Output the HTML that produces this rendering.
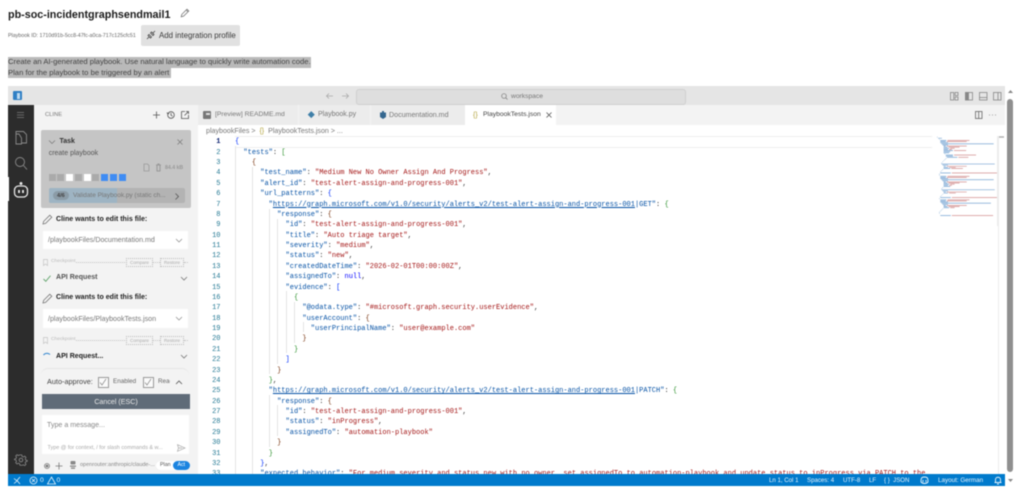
<!DOCTYPE html>
<html lang="en"><head><meta charset="utf-8"><title>pb-soc-incidentgraphsendmail1</title>
<style>
html,body{margin:0;padding:0;background:#fff;width:1024px;height:492px;overflow:hidden}
#r{position:relative;width:1024px;height:492px;overflow:hidden;font-family:"Liberation Sans",sans-serif;color:#333;filter:blur(.4px)}
.a{position:absolute}
.t{position:absolute;white-space:nowrap;line-height:10px;height:10px}
svg{position:absolute;overflow:visible}
#code,#nums{position:absolute;top:136px;font-family:"Liberation Mono",monospace;font-size:7.025px;line-height:10.37px;white-space:pre}
#nums{left:205px;width:15.5px;text-align:right;color:#237893}
#code{left:235px;color:#0451a5}
.s{color:#a31515}.b1{color:#0431fa}.b2{color:#319331}.b3{color:#7b3814}.n{color:#0000ff}.l{text-decoration:underline;text-decoration-color:#0451a5;text-underline-offset:1px}.p{color:#333}
.g{position:absolute;width:1px;background:#e4e4e4}
.drop{position:absolute;left:43px;width:145px;background:#fff}
.chk{position:absolute;border:1px dotted #bbb;height:7px;font-size:4.6px;line-height:7px;text-align:center;color:#aaa}
.dots{position:absolute;height:0;border-top:1px dotted #c4c4c4}
</style></head><body><div id="r">

<div class="t" style="left:8px;top:10px;font-size:10.75px;font-weight:700;color:#1b1b1b;line-height:10px">pb-soc-incidentgraphsendmail1</div>
<svg style="left:180px;top:8px" width="10" height="10" viewBox="0 0 10 10" fill="none" stroke="#777" stroke-width=".8"><path d="M1.200 8.800l.6-2.400L7 1.200 8.800 3 3.600 8.200z M6.200 2l1.800 1.800"/></svg>
<div class="t" style="left:8px;top:31px;font-size:5.3px;color:#666">Playbook ID: 1710d91b-5cc8-47fc-a0ca-717c125cfc51</div>
<div class="a" style="left:141px;top:25px;width:99px;height:21px;background:#e1e1e1;border-radius:2px"></div>
<svg style="left:146px;top:30px" width="10" height="10" viewBox="0 0 10 10" fill="none" stroke="#444" stroke-width=".8"><path d="M1 9l2-2M9 1L7 3M3 4.500L5.500 7 4.500 8 2 5.500zM4.500 3l1-1 2.500 2.500-1 1z"/></svg>
<div class="t" style="left:159px;top:31px;font-size:7.9px;color:#3a3a3a">Add integration profile</div>

<div class="a" style="left:8px;top:57px;width:303px;height:10.500px;background:#b9b9b9"></div>
<div class="a" style="left:8px;top:67.500px;width:163px;height:10.500px;background:#b9b9b9"></div>
<div class="t" style="left:8px;top:57px;font-size:7.67px;color:#444">Create an AI-generated playbook. Use natural language to quickly write automation code.</div>
<div class="t" style="left:8px;top:67.500px;font-size:7.67px;color:#444">Plan for the playbook to be triggered by an alert</div>

<!-- IDE frame -->
<div class="a" style="left:8px;top:86px;width:997px;height:19px;background:#e5e5e5"></div>
<div class="a" style="left:13px;top:91px;width:9px;height:9px;background:#2f7fc4;border-radius:1px"></div>
<div class="a" style="left:16.500px;top:92.500px;width:3px;height:6px;background:#bcd9f0"></div>
<svg style="left:325px;top:92px" width="26" height="8" viewBox="0 0 26 8" fill="none" stroke="#aaa" stroke-width=".8"><path d="M8 4H1.500M4 1.500L1.500 4 4 6.500M17 4h6.500M21 1.500L23.500 4 21 6.500"/></svg>
<div class="a" style="left:356px;top:89px;width:328px;height:13.500px;background:#dedede;border:1px solid #cfcfcf;border-radius:3px"></div>
<svg style="left:501px;top:93px" width="7" height="7" viewBox="0 0 7 7" fill="none" stroke="#777" stroke-width=".7"><circle cx="3" cy="3" r="2.300"/><path d="M4.700 4.700L6.500 6.500"/></svg>
<div class="t" style="left:511px;top:92px;font-size:6.700px;color:#777">workspace</div>
<svg style="left:950px;top:92px" width="52" height="9" viewBox="0 0 52 9" fill="none" stroke="#888" stroke-width=".8"><rect x=".5" y=".5" width="3.200" height="7.500"/><rect x="5" y=".5" width="3" height="3"/><rect x="5" y="5" width="3" height="3"/><rect x="15.500" y=".5" width="7" height="7.500"/><rect x="15.500" y=".5" width="3" height="7.500" fill="#888"/><rect x="29.500" y=".5" width="7.500" height="7.500"/><path d="M29.500 5.500H37"/><rect x="43.500" y=".5" width="7.500" height="7.500"/><path d="M48 .5V8"/></svg>

<!-- activity bar -->
<div class="a" style="left:8px;top:105px;width:25.500px;height:369px;background:#2c2c2c"></div>
<svg style="left:8px;top:105px" width="26" height="369" viewBox="0 0 26 369" fill="none" stroke="#8a8a8a" stroke-width=".9">
<path d="M9 7.500h7M9 10h7M9 12.500h7" stroke="#666"/>
<path d="M8 29V26.500h7.500l3 3V38h-5M8 29v10h5.500V33L11 29z"/>
<circle cx="12" cy="57" r="4.500"/><path d="M15.500 60.500L19 64.500"/>
<rect x="6.500" y="81" width="13" height="11" rx="4" stroke="#e8e8e8" stroke-width="1.300"/><circle cx="13" cy="78.500" r="1" fill="#e8e8e8" stroke="#e8e8e8"/><path d="M11 85v3M15 85v3" stroke="#fff" stroke-width="1.600"/>
<g stroke="#8a8a8a" transform="translate(7,349)"><circle cx="6" cy="6" r="1.800"/><path d="M5 .5h2l.4 1.700 1.400.6 1.500-.9 1.400 1.400-.9 1.500.6 1.400 1.700.4v1l-1.700.5-.6 1.400.9 1.500-1.400 1.400-1.500-.9-1.400.6L7 12H5l-.4-1.700-1.400-.6-1.500.9L.3 9.200l.9-1.500-.6-1.400L-1 6V5l1.600-.4.6-1.400L.3 1.700 1.700.3l1.500.9L4.600.6z" transform="scale(.9) translate(.5,.5)"/></g>
</svg>
<div class="a" style="left:8px;top:177px;width:1px;height:24px;background:#fff"></div>

<!-- sidebar -->
<div class="a" style="left:33.500px;top:105px;width:164.500px;height:369px;background:#f3f3f3"></div>
<div class="t" style="left:45px;top:110px;font-size:5.800px;color:#777">CLINE</div>
<svg style="left:151px;top:109px" width="42" height="12" viewBox="0 0 42 12" fill="none" stroke="#555" stroke-width=".8"><path d="M5.500 2.500v7M2 6h7"/><circle cx="20" cy="6" r="3.300"/><path d="M20 4v2.200l1.500 1M16 3.500l.8 1.500 1.400-.6"/><path d="M30.500 2.500H34M37.500 6v3.500h-7v-7M33.500 6.500l4-4M35 2.500h2.500V5" /></svg>

<div class="a" style="left:41px;top:130px;width:150px;height:78px;background:#c5c5c5;border-radius:2px"></div>
<svg style="left:48px;top:139px" width="8" height="6" viewBox="0 0 8 6" fill="none" stroke="#777" stroke-width=".7"><path d="M1 1.500L4 4.500 7 1.500"/></svg>
<div class="t" style="left:59.500px;top:136.500px;font-size:7px;font-weight:700;color:#333">Task</div>
<svg style="left:176.500px;top:139px" width="6" height="6" viewBox="0 0 6 6" stroke="#777" stroke-width=".7"><path d="M.5.500l5 5M5.500.500l-5 5"/></svg>
<div class="t" style="left:48.700px;top:148.500px;font-size:7px;color:#555">create playbook</div>
<svg style="left:143px;top:163px" width="20" height="9" viewBox="0 0 20 9" fill="none" stroke="#999" stroke-width=".8"><path d="M1 1h3.500L6 2.500V8H1z"/><path d="M13 2h5M14 2V8h3V2M15 2V1h1v1" stroke-width="1.100"/></svg>
<div class="t" style="left:165px;top:162.500px;font-size:5.200px;font-weight:700;color:#999">84.4 kB</div>
<div class="a" style="left:48.500px;top:174px;width:7px;height:7px;background:#aaa"></div>
<div class="a" style="left:57px;top:174px;width:7px;height:7px;background:#aaa"></div>
<div class="a" style="left:66px;top:174px;width:7px;height:7px;background:#fff"></div>
<div class="a" style="left:75px;top:174px;width:7px;height:7px;background:#aaa"></div>
<div class="a" style="left:84px;top:174px;width:7px;height:7px;background:#fff"></div>
<div class="a" style="left:92px;top:174px;width:7px;height:7px;background:#aaa"></div>
<div class="a" style="left:101px;top:174px;width:7px;height:7px;background:#3f8cf3"></div>
<div class="a" style="left:110px;top:174px;width:7px;height:7px;background:#3f8cf3"></div>
<div class="a" style="left:118.500px;top:174px;width:7px;height:7px;background:#3f8cf3"></div>
<div class="a" style="left:48.500px;top:188px;width:136.500px;height:15px;background:#b3b3b3;border-radius:2px"></div>
<div class="a" style="left:48.500px;top:188px;width:68.500px;height:15px;background:#9eb4c3;border-radius:2px 0 0 2px"></div>
<div class="a" style="left:53px;top:191px;width:16px;height:9px;background:#8b9ba6;border-radius:5px"></div>
<div class="t" style="left:57px;top:190.500px;font-size:5.600px;font-weight:700;color:#444">4/6</div>
<div class="t" style="left:73px;top:190.500px;font-size:6.450px;color:#777">Validate Playbook.py (static ch...</div>
<svg style="left:174px;top:192.500px" width="6" height="7" viewBox="0 0 6 7" fill="none" stroke="#555" stroke-width=".8"><path d="M1.500 .5L4.500 3.500 1.500 6.500"/></svg>

<svg style="left:42px;top:214px" width="11" height="11" viewBox="0 0 11 11" fill="none" stroke="#777" stroke-width=".8"><path d="M1 10l.6-2.600L7.800 1.200 9.800 3.200 3.600 9.400z"/></svg>
<div class="t" style="left:56px;top:214.500px;font-size:7.050px;font-weight:700;color:#222">Cline wants to edit this file:</div>
<div class="drop" style="top:231px;height:18px"></div>
<div class="t" style="left:48px;top:235px;font-size:7.100px;color:#777">/playbookFiles/Documentation.md</div>
<svg style="left:175px;top:237.500px" width="8" height="5" viewBox="0 0 8 5" fill="none" stroke="#888" stroke-width=".7"><path d="M1 1l3 3 3-3"/></svg>
<svg style="left:43px;top:259px" width="5" height="7" viewBox="0 0 5 7" fill="none" stroke="#c4c4c4" stroke-width=".7"><path d="M.5.500h4v6l-2-1.500-2 1.500z"/></svg>
<div class="t" style="left:51px;top:257px;font-size:4.900px;color:#bbb">Checkpoint</div>
<div class="dots" style="left:76px;top:262px;width:49px"></div>
<div class="chk" style="left:126px;top:258px;width:25px">Compare</div>
<div class="dots" style="left:153px;top:262px;width:7px"></div>
<div class="chk" style="left:160px;top:258px;width:22px">Restore</div>
<div class="dots" style="left:184px;top:262px;width:4px"></div>
<svg style="left:43px;top:274.500px" width="8" height="7" viewBox="0 0 8 7" fill="none" stroke="#64a56f" stroke-width=".9"><path d="M.5 4L2.800 6.300 7.500.700"/></svg>
<div class="t" style="left:56px;top:273px;font-size:7.050px;font-weight:700;color:#555">API Request</div>
<svg style="left:180px;top:275.500px" width="8" height="5" viewBox="0 0 8 5" fill="none" stroke="#777" stroke-width=".8"><path d="M1 1l3 3 3-3"/></svg>

<svg style="left:42px;top:292.500px" width="11" height="11" viewBox="0 0 11 11" fill="none" stroke="#777" stroke-width=".8"><path d="M1 10l.6-2.600L7.800 1.200 9.800 3.200 3.600 9.400z"/></svg>
<div class="t" style="left:56px;top:293px;font-size:7.050px;font-weight:700;color:#222">Cline wants to edit this file:</div>
<div class="drop" style="top:309px;height:19px"></div>
<div class="t" style="left:48px;top:314px;font-size:7.100px;color:#777">/playbookFiles/PlaybookTests.json</div>
<svg style="left:175px;top:316px" width="8" height="5" viewBox="0 0 8 5" fill="none" stroke="#888" stroke-width=".7"><path d="M1 1l3 3 3-3"/></svg>
<svg style="left:43px;top:337px" width="5" height="7" viewBox="0 0 5 7" fill="none" stroke="#c4c4c4" stroke-width=".7"><path d="M.5.500h4v6l-2-1.500-2 1.500z"/></svg>
<div class="t" style="left:51px;top:335px;font-size:4.900px;color:#bbb">Checkpoint</div>
<div class="dots" style="left:76px;top:340px;width:49px"></div>
<div class="chk" style="left:126px;top:336px;width:25px">Compare</div>
<div class="dots" style="left:153px;top:340px;width:7px"></div>
<div class="chk" style="left:160px;top:336px;width:22px">Restore</div>
<div class="dots" style="left:184px;top:340px;width:4px"></div>
<svg style="left:43px;top:352px" width="8" height="5" viewBox="0 0 8 5" fill="none" stroke="#3a8ad0" stroke-width="1.100"><path d="M.5 3C2 1 5 .8 7 2.500"/></svg>
<div class="t" style="left:56px;top:351.500px;font-size:7.050px;font-weight:700;color:#222">API Request...</div>
<svg style="left:180px;top:354px" width="8" height="5" viewBox="0 0 8 5" fill="none" stroke="#777" stroke-width=".8"><path d="M1 1l3 3 3-3"/></svg>

<div class="a" style="left:41px;top:368px;width:148px;height:20px;border-top:1px solid #e6e6e6;border-radius:7px 7px 0 0"></div>
<div class="t" style="left:47px;top:377px;font-size:7.300px;color:#444">Auto-approve:</div>
<div class="a" style="left:98px;top:377px;width:9px;height:9px;border:.8px solid #999;background:#fafafa"></div>
<svg style="left:99px;top:378px" width="8" height="8" viewBox="0 0 8 8" fill="none" stroke="#888" stroke-width=".7"><path d="M1 4.500L3 7 7 1"/></svg>
<div class="t" style="left:113px;top:377px;font-size:6.300px;color:#666">Enabled</div>
<div class="a" style="left:143px;top:377px;width:9px;height:9px;border:.8px solid #999;background:#fafafa"></div>
<svg style="left:144px;top:378px" width="8" height="8" viewBox="0 0 8 8" fill="none" stroke="#888" stroke-width=".7"><path d="M1 4.500L3 7 7 1"/></svg>
<div class="a" style="left:158px;top:377px;width:12px;height:10px;overflow:hidden"><div class="t" style="left:0;top:0;font-size:6.300px;color:#666">Read</div></div>
<svg style="left:175px;top:380px" width="8" height="5" viewBox="0 0 8 5" fill="none" stroke="#555" stroke-width=".8"><path d="M1 4l3-3 3 3"/></svg>
<div class="a" style="left:42px;top:394px;width:148px;height:15px;background:#5f6b78"></div>
<div class="t" style="left:42px;top:397px;width:148px;text-align:center;font-size:7.100px;color:#e8e8e8">Cancel (ESC)</div>
<div class="a" style="left:42px;top:414.500px;width:147px;height:39px;background:#fff"></div>
<div class="t" style="left:47px;top:419.500px;font-size:7.100px;color:#888">Type a message...</div>
<div class="t" style="left:47.500px;top:443px;font-size:5.450px;color:#aaa">Type @ for context, / for slash commands &amp; w...</div>
<svg style="left:177px;top:444px" width="9" height="8" viewBox="0 0 9 8" fill="none" stroke="#aaa" stroke-width=".7"><path d="M.5.700L8 4 .5 7.300 1.500 4zM1.500 4H5"/></svg>
<svg style="left:44px;top:461px" width="24" height="9" viewBox="0 0 24 9" fill="none" stroke="#777" stroke-width=".8"><circle cx="3" cy="5" r="2.500"/><circle cx="3" cy="5" r="1" fill="#777"/><path d="M15 1.500v7M11.500 5h7"/></svg>
<svg style="left:69px;top:460.500px" width="8" height="8" viewBox="0 0 8 8" fill="#888"><rect x="1.500" y="0" width="5" height="3.500" rx="1"/><rect x="1" y="4.500" width="6" height="1.300"/><rect x="2" y="6.500" width="4" height="1.300"/></svg>
<div class="t" style="left:80px;top:460px;font-size:5.500px;color:#888">openrouter:anthropic/claude-...</div>
<div class="a" style="left:156px;top:460.500px;width:33.500px;height:9px;background:#fff;border-radius:5px"></div>
<div class="a" style="left:173px;top:460.500px;width:16.500px;height:9px;background:#1b84e0;border-radius:5px"></div>
<div class="t" style="left:160px;top:460px;font-size:5.300px;color:#555">Plan</div>
<div class="t" style="left:177.500px;top:460px;font-size:5.300px;color:#fff">Act</div>

<!-- tabs -->
<div class="a" style="left:198px;top:105px;width:807px;height:20px;background:#f3f3f3"></div>
<div class="a" style="left:198px;top:105px;width:100px;height:20px;background:#ececec"></div>
<div class="a" style="left:298.500px;top:105px;width:71.500px;height:20px;background:#ececec"></div>
<div class="a" style="left:370.500px;top:105px;width:94.500px;height:20px;background:#ececec"></div>
<div class="a" style="left:465px;top:105px;width:91px;height:20px;background:#fff"></div>
<div class="a" style="left:203px;top:111px;width:8px;height:8px;background:#777;border-radius:1px"></div>
<div class="a" style="left:206px;top:112.500px;width:4px;height:2px;background:#ddd"></div>
<div class="t" style="left:215px;top:110px;font-size:6.750px;color:#777">[Preview] README.md</div>
<div class="a" style="left:309px;top:112px;width:4.500px;height:4.500px;background:#3f7fa8;transform:rotate(45deg)"></div>
<div class="t" style="left:318px;top:110px;font-size:7.000px;color:#777">Playbook.py</div>
<svg style="left:380px;top:110.500px" width="6" height="8" viewBox="0 0 6 8" fill="#35678f"><path d="M2 0h2v1.500h2V6L3 8 0 6V1.500h2z"/></svg>
<div class="t" style="left:389px;top:110px;font-size:7.100px;color:#777">Documentation.md</div>
<div class="t" style="left:473px;top:110px;font-size:7.100px;color:#b5a642">{}</div>
<div class="t" style="left:483px;top:110px;font-size:6.750px;color:#444">PlaybookTests.json</div>
<svg style="left:546px;top:111.500px" width="6" height="6" viewBox="0 0 6 6" stroke="#555" stroke-width=".8"><path d="M.5.500l5 5M5.500.500l-5 5"/></svg>
<svg style="left:975px;top:111px" width="24" height="8" viewBox="0 0 24 8" fill="none" stroke="#666" stroke-width=".8"><rect x=".5" y=".5" width="6.500" height="7"/><path d="M3.700.500v7"/><path d="M14 4h1M17 4h1M20 4h1" stroke="#888"/></svg>

<!-- editor -->
<div class="a" style="left:198px;top:125px;width:807px;height:349px;background:#fff;overflow:hidden" id="ed"></div>
<div class="t" style="left:206px;top:126px;font-size:7.100px;color:#777">playbookFiles &gt;&nbsp; <span style="color:#b5a642">{}</span>&nbsp; PlaybookTests.json &gt; ...</div>
<div class="a" style="left:235px;top:136px;width:697px;height:9.500px;border-top:1px solid #eee;border-bottom:1px solid #eee"></div>

<div class="a" style="left:198px;top:136px;width:738px;height:338px;overflow:hidden">
<div class="g" style="left:36.500px;top:10px;height:328px"></div>
<div class="g" style="left:53.500px;top:31px;height:307px"></div>
<div class="g" style="left:70.500px;top:73px;height:165px"></div>
<div class="g" style="left:79px;top:83px;height:145px"></div>
<div class="g" style="left:87.500px;top:155px;height:62px"></div>
<div class="g" style="left:96px;top:166px;height:41px"></div>
<div class="g" style="left:104.500px;top:186px;height:10px"></div>
<div class="g" style="left:70.500px;top:259px;height:52px"></div>
<div class="g" style="left:79px;top:269px;height:31px"></div>
</div>

<div class="a" style="left:198px;top:136px;width:30px;height:338px;overflow:hidden">
<div id="nums" style="left:7px;top:1.300px"><span style="color:#0b216f;font-weight:700">1</span>
2
3
4
5
6
7
8
9
10
11
12
13
14
15
16
17
18
19
20
21
22
23
24
25
26
27
28
29
30
31
32
33</div></div>

<div class="a" style="left:235px;top:136px;width:700px;height:338px;overflow:hidden">
<div id="code" style="left:0;top:1.300px"><span class="b1">{</span>
  "tests"<span class="p">:</span> <span class="b2">[</span>
    <span class="b3">{</span>
      "test_name"<span class="p">:</span> <span class="s">"Medium New No Owner Assign And Progress"</span><span class="p">,</span>
      "alert_id"<span class="p">:</span> <span class="s">"test-alert-assign-and-progress-001"</span><span class="p">,</span>
      "url_patterns"<span class="p">:</span> <span class="b1">{</span>
        "<span class="l">https://graph.microsoft.com/v1.0/security/alerts_v2/test-alert-assign-and-progress-001</span>|GET"<span class="p">:</span> <span class="b2">{</span>
          "response"<span class="p">:</span> <span class="b3">{</span>
            "id"<span class="p">:</span> <span class="s">"test-alert-assign-and-progress-001"</span><span class="p">,</span>
            "title"<span class="p">:</span> <span class="s">"Auto triage target"</span><span class="p">,</span>
            "severity"<span class="p">:</span> <span class="s">"medium"</span><span class="p">,</span>
            "status"<span class="p">:</span> <span class="s">"new"</span><span class="p">,</span>
            "createdDateTime"<span class="p">:</span> <span class="s">"2026-02-01T00:00:00Z"</span><span class="p">,</span>
            "assignedTo"<span class="p">:</span> <span class="n">null</span><span class="p">,</span>
            "evidence"<span class="p">:</span> <span class="b1">[</span>
              <span class="b2">{</span>
                "@odata.type"<span class="p">:</span> <span class="s">"#microsoft.graph.security.userEvidence"</span><span class="p">,</span>
                "userAccount"<span class="p">:</span> <span class="b3">{</span>
                  "userPrincipalName"<span class="p">:</span> <span class="s">"user@example.com"</span>
                <span class="b3">}</span>
              <span class="b2">}</span>
            <span class="b1">]</span>
          <span class="b3">}</span>
        <span class="b2">}</span><span class="p">,</span>
        "<span class="l">https://graph.microsoft.com/v1.0/security/alerts_v2/test-alert-assign-and-progress-001</span>|PATCH"<span class="p">:</span> <span class="b2">{</span>
          "response"<span class="p">:</span> <span class="b3">{</span>
            "id"<span class="p">:</span> <span class="s">"test-alert-assign-and-progress-001"</span><span class="p">,</span>
            "status"<span class="p">:</span> <span class="s">"inProgress"</span><span class="p">,</span>
            "assignedTo"<span class="p">:</span> <span class="s">"automation-playbook"</span>
          <span class="b3">}</span>
        <span class="b2">}</span>
      <span class="b1">}</span><span class="p">,</span>
      "expected_behavior"<span class="p">:</span> <span class="s">"For medium severity and status new with no owner, set assignedTo to automation-playbook and update status to inProgress via PATCH to the</span></div></div>

<!-- minimap -->
<svg style="left:937px;top:136px" width="68" height="90" viewBox="0 0 68 90" fill="none" opacity=".8">
<g transform="scale(.55,1.12)" stroke-width=".75">
<path stroke="#6f9fd0" d="M0 1h1M2 2h7M4 3h1M6 4h11M6 5h10M6 6h14M8 7h95M10 8h10M12 9h4M12 10h7M12 11h10M12 12h8M12 13h17M12 14h12M12 15h10M14 16h1M16 17h13M16 18h13M18 19h19M16 20h1M14 21h1M12 22h1M10 23h1M8 24h1M8 25h97M10 26h10M12 27h4M12 28h8M12 29h12M10 30h1M8 31h1M6 32h1M6 33h19"/>
<path stroke="#d08a8a" d="M19 4h40M18 5h36M18 9h36M21 10h20M24 11h8M22 12h5M31 13h22M31 17h40M39 19h18M18 27h36M22 28h12M26 29h21M27 33h82"/>
<g transform="translate(0,33)">
<path stroke="#6f9fd0" d="M4 1h1M4 2h1M6 3h11M6 4h10M6 5h14M8 6h95M10 7h10M12 8h4M12 9h7M12 10h10M12 11h8M12 12h12M10 13h1M8 14h1M8 15h97M10 16h10M12 17h4M12 18h8M10 19h1M8 20h1M6 21h1M6 22h19"/>
<path stroke="#d08a8a" d="M19 3h40M18 4h36M18 8h36M21 9h20M24 10h8M22 11h5M18 17h36M22 18h12M27 22h82"/>
</g>
<g transform="translate(0,55)">
<path stroke="#6f9fd0" d="M4 1h1M6 2h11M6 3h10M6 4h14M8 5h90M10 6h10M12 7h4M12 8h7M12 9h10M10 10h1M8 11h1M6 12h1M4 13h1M4 14h1M6 16h19"/>
<path stroke="#d08a8a" d="M19 2h40M18 3h36M18 7h36M21 8h20M24 9h8M27 16h75"/>
</g>
</g>
<path d="M60.500 0v90" stroke="#e8e8e8"/>
<path d="M61 1h6" stroke="#999" stroke-width="1.400"/>
</svg>
<div class="a" style="left:997.500px;top:136px;width:1px;height:338px;background:#ececec"></div>

<!-- status bar -->
<div class="a" style="left:8px;top:474px;width:997px;height:12px;background:#007acc"></div>
<svg style="left:13px;top:476px" width="50" height="9" viewBox="0 0 50 9" fill="none" stroke="#e8f4fc" stroke-width=".8"><path d="M1 7.500L4 5 1 2.500M7 1L4 4.500 7 8"/><circle cx="20.500" cy="4.500" r="3.500"/><path d="M19 3l3 3M22 3l-3 3"/><path d="M38.500 1L42.500 8H34.500z"/></svg>
<div class="t" style="left:40px;top:475.500px;font-size:6.800px;color:#e8f4fc">0</div>
<div class="t" style="left:56.500px;top:475.500px;font-size:6.800px;color:#e8f4fc">0</div>
<div class="t" style="left:769px;top:475.500px;font-size:6.100px;color:#e8f4fc">Ln 1, Col 1</div>
<div class="t" style="left:807px;top:475.500px;font-size:6.100px;color:#e8f4fc">Spaces: 4</div>
<div class="t" style="left:843px;top:475.500px;font-size:6.100px;color:#e8f4fc">UTF-8</div>
<div class="t" style="left:869px;top:475.500px;font-size:6.100px;color:#e8f4fc">LF</div>
<div class="t" style="left:884px;top:475.500px;font-size:6.100px;color:#e8f4fc">{ }&nbsp; JSON</div>
<svg style="left:920px;top:475.500px" width="9" height="9" viewBox="0 0 9 9" fill="none" stroke="#e8f4fc" stroke-width=".9"><path d="M1 6c0-3 0-5 3.500-5S8 3 8 6c-2 2-5 2-7 0z"/><path d="M3 4v2M6 4v2"/></svg>
<div class="t" style="left:938px;top:475.500px;font-size:6.300px;color:#e8f4fc">Layout: German</div>
<svg style="left:994px;top:475.500px" width="8" height="9" viewBox="0 0 8 9" fill="none" stroke="#e8f4fc" stroke-width=".9"><path d="M1.500 6.500V3.500C1.500 .5 6.500 .5 6.500 3.500V6.500zM.5 6.500h7M3 8h2"/></svg>

<!-- page scrollbar -->
<svg style="left:1007px;top:89px" width="7" height="5" viewBox="0 0 7 5" fill="#888"><path d="M3.500 1L6 4H1z"/></svg>
<div class="a" style="left:1007px;top:99px;width:6px;height:373px;background:#8f8f8f;border-radius:3px"></div>
<svg style="left:1007px;top:478px" width="7" height="5" viewBox="0 0 7 5" fill="#888"><path d="M1 1h5L3.500 4z"/></svg>

</div></body></html>
